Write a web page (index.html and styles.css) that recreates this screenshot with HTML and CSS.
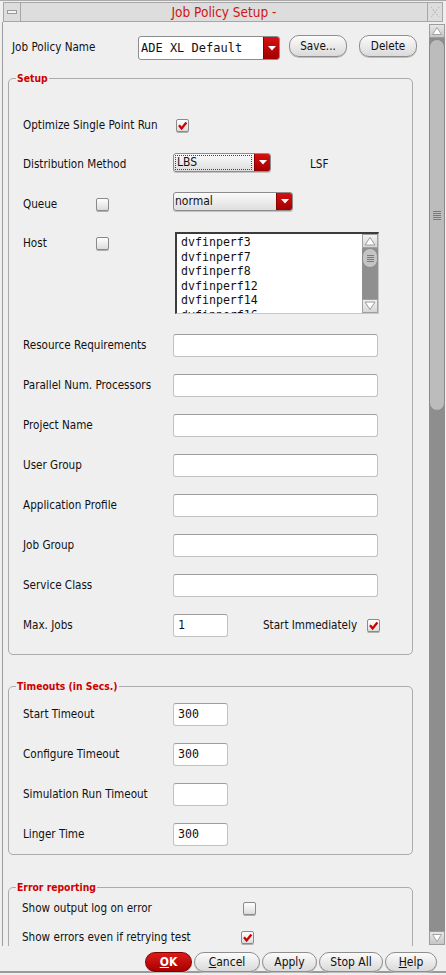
FILE: index.html
```html
<!DOCTYPE html>
<html>
<head>
<meta charset="utf-8">
<title>Job Policy Setup</title>
<link rel="stylesheet" href="styles.css">
</head>
<body>
<div class="window">
  <div class="titlebar">
    <div class="tb-btn tb-left"><span class="tb-minus"></span></div>
    <div class="tb-title">Job Policy Setup -</div>
    <div class="tb-btn tb-right">
      <svg width="14" height="16" viewBox="0 0 14 16"><path d="M3 3 L11 13 M11 3 L3 13" stroke="#b8b8b8" stroke-width="1.2" stroke-dasharray="1.5 1.5" fill="none"/></svg>
    </div>
  </div>
  <div class="main">
    <div class="viewport">
      <div class="top-row">
        <span class="name-lbl">Job Policy Name</span>
        <div class="combo combo-name">
          <span class="combo-text mono">ADE XL Default</span>
          <span class="combo-arrow"><svg width="8" height="5" viewBox="0 0 8 5"><path d="M0 0 H8 L4 4.5 Z" fill="#fff"/></svg></span>
        </div>
        <button class="btn btn-save">Save...</button>
        <button class="btn btn-delete">Delete</button>
      </div>

      <div class="group group-setup">
        <div class="group-title">Setup</div>
        <div class="row row-opt">
          <span class="lbl">Optimize Single Point Run</span>
          <span class="chk chk-opt"><svg width="13" height="13" viewBox="0 0 13 13"><path d="M3 6.2 L5.6 9.4 L10.4 3.6" stroke="#cc0000" stroke-width="2.3" fill="none"/></svg></span>
        </div>
        <div class="row row-dist">
          <span class="lbl low2">Distribution Method</span>
          <div class="combo combo-small combo-lbs">
            <span class="combo-text"><span class="focus">LBS</span></span>
            <span class="combo-arrow"><svg width="8" height="5" viewBox="0 0 8 5"><path d="M0 0 H8 L4 4.5 Z" fill="#fff"/></svg></span>
          </div>
          <span class="lsf low2">LSF</span>
        </div>
        <div class="row row-queue">
          <span class="lbl lbl-short low3">Queue</span>
          <span class="chk-cell low3"><span class="chk"></span></span>
          <div class="combo combo-small combo-queue">
            <span class="combo-text">normal</span>
            <span class="combo-arrow"><svg width="8" height="5" viewBox="0 0 8 5"><path d="M0 0 H8 L4 4.5 Z" fill="#fff"/></svg></span>
          </div>
        </div>
        <div class="row row-host">
          <span class="lbl lbl-short host-lbl">Host</span>
          <span class="chk-cell host-chk"><span class="chk"></span></span>
          <div class="list">
            <div class="list-items mono">
              <div>dvfinperf3</div>
              <div>dvfinperf7</div>
              <div>dvfinperf8</div>
              <div>dvfinperf12</div>
              <div>dvfinperf14</div>
              <div>dvfinperf16</div>
            </div>
            <div class="list-scroll">
              <span class="ls-arrow"><svg width="14" height="12" viewBox="0 0 14 12"><path d="M2 10 L7 2.5 L12 10 Z" fill="#fff" stroke="#9a9a9a" stroke-width="1"/></svg></span>
              <span class="ls-track">
                <span class="ls-thumb"><span class="grip"></span></span>
              </span>
              <span class="ls-arrow"><svg width="14" height="12" viewBox="0 0 14 12"><path d="M2 2 L7 9.5 L12 2 Z" fill="#fff" stroke="#9a9a9a" stroke-width="1"/></svg></span>
            </div>
          </div>
        </div>
        <div class="row"><span class="lbl">Resource Requirements</span><span class="field"></span></div>
        <div class="row"><span class="lbl">Parallel Num. Processors</span><span class="field"></span></div>
        <div class="row"><span class="lbl">Project Name</span><span class="field"></span></div>
        <div class="row"><span class="lbl">User Group</span><span class="field"></span></div>
        <div class="row"><span class="lbl">Application Profile</span><span class="field"></span></div>
        <div class="row"><span class="lbl">Job Group</span><span class="field"></span></div>
        <div class="row"><span class="lbl">Service Class</span><span class="field"></span></div>
        <div class="row">
          <span class="lbl">Max. Jobs</span>
          <span class="field field-short mono">1</span>
          <span class="start-lbl">Start Immediately</span>
          <span class="chk chk-start"><svg width="13" height="13" viewBox="0 0 13 13"><path d="M3 6.2 L5.6 9.4 L10.4 3.6" stroke="#cc0000" stroke-width="2.3" fill="none"/></svg></span>
        </div>
      </div>

      <div class="group group-timeouts">
        <div class="group-title">Timeouts (in Secs.)</div>
        <div class="row row-first"><span class="lbl">Start Timeout</span><span class="field field-short mono">300</span></div>
        <div class="row"><span class="lbl">Configure Timeout</span><span class="field field-short mono">300</span></div>
        <div class="row"><span class="lbl">Simulation Run Timeout</span><span class="field field-short mono"></span></div>
        <div class="row"><span class="lbl">Linger Time</span><span class="field field-short mono">300</span></div>
      </div>

      <div class="group group-error">
        <div class="group-title">Error reporting</div>
        <div class="row row-err1"><span class="lbl lbl-err">Show output log on error</span><span class="chk"></span></div>
        <div class="row row-err2"><span class="lbl lbl-err2">Show errors even if retrying test</span><span class="chk"><svg width="13" height="13" viewBox="0 0 13 13"><path d="M3 6.2 L5.6 9.4 L10.4 3.6" stroke="#cc0000" stroke-width="2.3" fill="none"/></svg></span></div>
      </div>
    </div>

    <div class="vscroll">
      <span class="vs-arrow"><svg width="16" height="14" viewBox="0 0 16 14"><path d="M3 11 L8 3 L13 11 Z" fill="#fff" stroke="#999" stroke-width="1"/></svg></span>
      <span class="vs-track">
        <span class="vs-thumb"><span class="grip grip-big"></span></span>
      </span>
      <span class="vs-arrow"><svg width="16" height="14" viewBox="0 0 16 14"><path d="M3 3 L8 11 L13 3 Z" fill="#fff" stroke="#999" stroke-width="1"/></svg></span>
    </div>
  </div>

  <div class="footer">
    <button class="btn fbtn btn-ok"><u>O</u>K</button>
    <button class="btn fbtn btn-cancel"><u>C</u>ancel</button>
    <button class="btn fbtn btn-apply">Apply</button>
    <button class="btn fbtn btn-stop">Stop All</button>
    <button class="btn fbtn btn-help"><u>H</u>elp</button>
  </div>
</div>
</body>
</html>
```

FILE: styles.css
```css
* { box-sizing: border-box; }
html, body { margin: 0; padding: 0; }
body {
  background: #efefef;
  font-family: "DejaVu Sans Condensed", "DejaVu Sans", sans-serif;
  font-stretch: condensed;
  font-size: 11.6px;
  color: #111;
}
.mono {
  font-family: "DejaVu Sans Mono", "Liberation Mono", monospace;
  font-stretch: normal;
}
.window {
  width: 446px;
  height: 975px;
  display: flex;
  flex-direction: column;
  background: #efefef;
  border-top: 1px solid #a9a9a9;
  overflow: hidden;
}

/* title bar */
.titlebar {
  display: flex;
  height: 21px;
  padding: 1px 3px 0 3px;
  flex: none;
}
.tb-btn {
  width: 18px;
  height: 20px;
  border: 1px solid #a6a6a6;
  background: #dddddd;
  display: flex;
  align-items: center;
  justify-content: center;
}
.tb-right { width: 16px; }
.tb-minus {
  width: 10px;
  height: 4px;
  border: 1px solid #9a9a9a;
  background: #f4f4f4;
}
.tb-title {
  flex: 1;
  height: 20px;
  border-top: 1px solid #a6a6a6;
  border-bottom: 1px solid #a6a6a6;
  background: #dddddd;
  color: #cc1515;
  font-size: 13.5px;
  line-height: 18px;
  text-align: center;
}

/* main area */
.main {
  display: flex;
  height: 924px;
  flex: none;
  padding-left: 2px;
}
.viewport {
  width: 426px;
  height: 924px;
  border-left: 1px solid #9c9c9c;
  overflow: hidden;
}

.top-row {
  display: flex;
  align-items: flex-start;
  height: 26px;
  margin-top: 13px;
  padding-left: 9px;
}
.name-lbl {
  width: 126px;
  line-height: 24px;
}
.combo {
  display: flex;
  border: 1px solid #8c8c8c;
  border-radius: 3px;
  overflow: hidden;
}
.combo-name {
  width: 142px;
  height: 24px;
  margin-top: 1px;
  background: #fff;
}
.combo-text {
  flex: 1;
  display: flex;
  align-items: center;
  padding-left: 2px;
  white-space: nowrap;
}
.combo-name .combo-text { font-size: 12px; padding-left: 2px; }
.combo-arrow {
  width: 16px;
  flex: none;
  background: linear-gradient(#d81010, #a00000);
  display: flex;
  align-items: center;
  justify-content: center;
  border-left: 1px solid #8a0000;
}
.combo-small {
  height: 19px;
  background: linear-gradient(#fafafa, #dedede);
  box-shadow: 0 1px 0 #c4c4c4;
}
.combo-lbs { width: 98px; }
.combo-queue { width: 120px; }
.combo-small .combo-text { padding-left: 1px; font-size: 12px; }
.focus {
  display: block;
  width: 100%;
  margin-right: 2px;
  border: 1px dotted #444;
  line-height: 13px;
  padding-left: 1px;
}

.btn {
  font-family: inherit;
  font-stretch: condensed;
  font-size: 11.6px;
  color: #111;
  border: 1px solid #8e8e8e;
  border-radius: 10px;
  background: linear-gradient(#fbfbfb, #dadada);
  padding: 0;
  box-shadow: 0 1px 0 #bdbdbd;
}
.btn-save { width: 58px; height: 22px; margin-left: 9px; }
.btn-delete { width: 58px; height: 22px; margin-left: 12px; }

/* groups */
.group {
  margin-left: 5px;
  width: 405px;
  border: 1px solid #ababab;
  border-radius: 5px;
}
.group-setup { margin-top: 17px; padding-bottom: 9px; }
.group-timeouts { margin-top: 31px; }
.group-error { margin-top: 32px; height: 120px; }
.group-title {
  width: fit-content;
  height: 14px;
  margin: -8px 0 0 7px;
  padding: 0 1px;
  background: #efefef;
  color: #cc0000;
  font-weight: bold;
  font-size: 10.3px;
  line-height: 14px;
}

.row {
  display: flex;
  align-items: center;
  height: 40px;
  padding-left: 14px;
}
.lbl { width: 150px; flex: none; white-space: nowrap; }
.lbl-short { width: 73px; }
.low2 { margin-top: 4px; }
.low3 { margin-top: 6px; }
.chk-cell { width: 77px; flex: none; display: flex; }
.chk {
  width: 13px;
  height: 13px;
  flex: none;
  border: 1px solid #8a8a8a;
  border-radius: 2px;
  background: linear-gradient(#ffffff, #dcdcdc);
  box-shadow: 0 1px 0 #b0b0b0;
  display: flex;
  align-items: center;
  justify-content: center;
}
.chk svg { margin: -1px; }
.chk-opt { margin-left: 3px; }

.row-opt { height: 36px; margin-top: 22px; }
.row-dist { height: 38px; }
.lsf { margin-left: 39px; }

.row-host {
  height: 104px;
  align-items: flex-start;
  padding-top: 11px;
}
.host-lbl { line-height: 22px; }
.host-chk { height: 22px; align-items: center; }
.list {
  width: 204px;
  height: 82px;
  margin-left: 2px;
  display: flex;
  background: #fff;
  border-top: 2px solid #3c3c3c;
  border-left: 2px solid #3c3c3c;
  border-right: 1px solid #c8c8c8;
  border-bottom: 1px solid #c8c8c8;
  overflow: hidden;
}
.list-items {
  flex: 1;
  padding: 1px 0 0 4px;
  font-size: 11.6px;
  line-height: 14.6px;
}
.list-scroll {
  width: 16px;
  display: flex;
  flex-direction: column;
  background: #8f8f8f;
}
.ls-arrow {
  height: 14px;
  flex: none;
  background: linear-gradient(#f2f2f2, #d6d6d6);
  border: 1px solid #a0a0a0;
  display: flex;
  align-items: center;
  justify-content: center;
}
.ls-track { flex: 1; }
.ls-thumb {
  display: flex;
  align-items: center;
  justify-content: center;
  height: 20px;
  background: #c4c4c4;
  border: 1px solid #8a8a8a;
  border-radius: 8px;
}
.grip {
  width: 7px;
  height: 7px;
  background: repeating-linear-gradient(#7a7a7a 0 1px, transparent 1px 2px);
}

.field {
  width: 205px;
  height: 23px;
  flex: none;
  background: #fff;
  border: 1px solid #c2c2c2;
  border-top-color: #9e9e9e;
  border-radius: 3px;
  display: flex;
  align-items: center;
  padding-left: 4px;
  font-size: 11.6px;
}
.field-short { width: 55px; }
.start-lbl { margin-left: 35px; white-space: nowrap; width: 104px; flex: none; }

.row-first { margin-top: 1px; }

.group-error .row { padding-left: 13px; }
.row-err1 { height: 28px; }
.row-err2 { height: 30px; }
.lbl-err { width: 221px; }
.lbl-err2 { width: 219px; }

/* main scrollbar */
.vscroll {
  width: 16px;
  margin: 2px 0 0 1px;
  height: 921px;
  display: flex;
  flex-direction: column;
  background: #8e8e8e;
}
.vs-arrow {
  height: 14px;
  flex: none;
  background: linear-gradient(#e6e6e6, #c6c6c6);
  border: 1px solid #9c9c9c;
  display: flex;
  align-items: center;
  justify-content: center;
}
.vs-track { flex: 1; display: flex; flex-direction: column; padding-top: 1px; }
.vs-thumb {
  height: 372px;
  background: #bcbcbc;
  border: 1px solid #8a8a8a;
  border-radius: 8px;
  display: flex;
  align-items: center;
  justify-content: center;
}
.grip-big { width: 8px; height: 9px; margin-top: -20px; }

/* footer */
.footer {
  display: flex;
  justify-content: flex-end;
  gap: 2px;
  height: 27px;
  padding: 6px 9px 0 0;
  border-bottom: 2px solid #9a9a9a;
  flex: none;
}
.fbtn { height: 20px; font-size: 12px; }
.btn-ok {
  width: 47px;
  background: linear-gradient(#de1a1a, #a80000);
  border-color: #800000;
  color: #fff;
  font-weight: bold;
}
.btn-cancel { width: 66px; }
.btn-apply { width: 55px; }
.btn-stop { width: 64px; }
.btn-help { width: 52px; }
```
